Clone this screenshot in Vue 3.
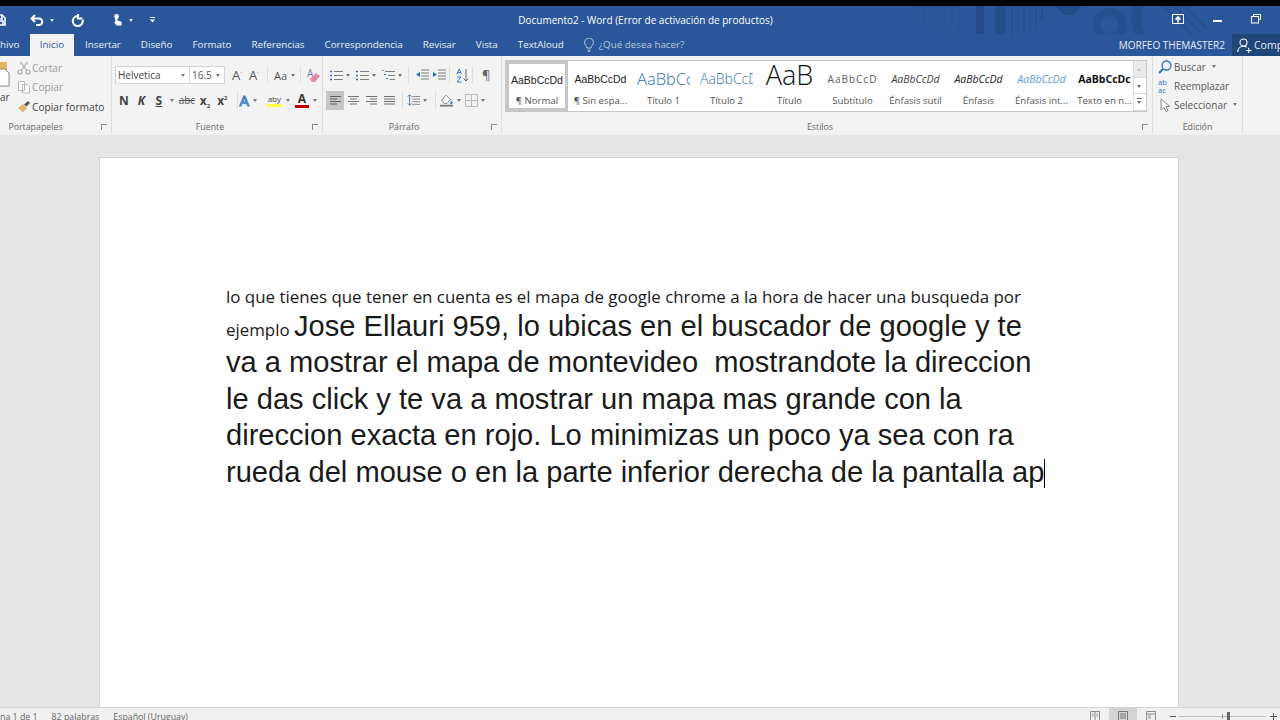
<script setup>
const tabs = ['Insertar', 'Diseño', 'Formato', 'Referencias', 'Correspondencia', 'Revisar', 'Vista', 'TextAloud']

const styles = [
  { sample: 'AaBbCcDd', name: '¶ Normal', cls: 'st-normal', active: true },
  { sample: 'AaBbCcDd', name: '¶ Sin espa...', cls: 'st-normal' },
  { sample: 'AaBbCc', name: 'Título 1', cls: 'st-h1' },
  { sample: 'AaBbCcD', name: 'Título 2', cls: 'st-h2' },
  { sample: 'AaB', name: 'Título', cls: 'st-title' },
  { sample: 'AaBbCcD', name: 'Subtítulo', cls: 'st-sub' },
  { sample: 'AaBbCcDd', name: 'Énfasis sutil', cls: 'st-em-s' },
  { sample: 'AaBbCcDd', name: 'Énfasis', cls: 'st-em' },
  { sample: 'AaBbCcDd', name: 'Énfasis int...', cls: 'st-em-i' },
  { sample: 'AaBbCcDc', name: 'Texto en n...', cls: 'st-bold' },
]

const bigLines = [
  'va a mostrar el mapa de montevideo  mostrandote la direccion',
  'le das click y te va a mostrar un mapa mas grande con la',
  'direccion exacta en rojo. Lo minimizas un poco ya sea con ra',
]
</script>

<template>
  <div class="app">
    <div class="blackbar"></div>

    <header class="titlebar">
      <svg class="pattern" width="320" height="50" viewBox="0 0 320 50" fill="none" stroke="#274f8e">
        <g stroke-width="2" stroke="#2a5494">
          <path d="M17 0v16M24 0v18M31 0v12M38 0v24M45 0v20M52 0v16M59 0v28" />
        </g>
        <path d="M76 0v28l8 6V0z" fill="#244b87" stroke="none" />
        <path d="M95 0v32h11V0z" fill="#264e8b" stroke="none" />
        <g stroke-width="2">
          <path d="M112 0v32M118 0v30M124 0v26M130 0v24M136 0v20M142 0v14" />
        </g>
        <path d="M155 0l10 9h9l8-9z" fill="#244b87" stroke="none" />
        <circle cx="210" cy="19" r="13" stroke-width="8" />
        <path d="M240 -4a38 38 0 0 0 64 40" stroke-width="10" />
        <path d="M262 -2l34 34M272 -2l28 28M282 -2l24 24" stroke-width="2" />
      </svg>

      <div class="qat">
        <svg class="save" width="6" height="14" viewBox="0 0 6 14" fill="none" stroke="#fff" stroke-width="1.6">
          <path d="M-8 2h10l3 3v7H-8zM-3 2v4h5V2M-3 12V8h6v4" />
        </svg>
        <svg class="undo" width="14" height="12" viewBox="0 0 14 12" fill="none" stroke="#fff" stroke-width="2">
          <path d="M5 1L1.5 4.5 5 8M2 4.5h7a3 3 0 0 1 0 6.5H6" />
        </svg>
        <span class="caret light"></span>
        <svg class="redo" width="13" height="13" viewBox="0 0 13 13" fill="none" stroke="#fff" stroke-width="2">
          <path d="M8 2.2a5 5 0 1 0 3.6 3.6M7 0v4.4h4.4" />
        </svg>
        <svg class="touch" width="11" height="15" viewBox="0 0 12 15" fill="#fff">
          <circle cx="5" cy="3" r="2.6" />
          <path d="M3.6 3H6v4.4l4.4 1.4V13H5L2.4 9.4l1.2-.6z" />
        </svg>
        <span class="caret light"></span>
        <svg class="custom" width="6" height="6" viewBox="0 0 6 6" fill="#fff">
          <path d="M0 0h5v1H0zM0 2.4h5L2.5 5.4z" />
        </svg>
      </div>

      <div class="doc-title">Documento2 - Word (Error de activación de productos)</div>

      <div class="win-btns">
        <svg width="12" height="10" viewBox="0 0 12 10" fill="none" stroke="#fff">
          <rect x=".5" y=".5" width="11" height="9" />
          <path d="M6 8.5V3.4M3.6 5.6L6 3l2.4 2.6" stroke-width="1.6" />
        </svg>
        <span class="min"></span>
        <svg width="10" height="10" viewBox="0 0 10 10" fill="none" stroke="#fff">
          <path d="M2.5 2.5V.5h7v5h-2" />
          <rect x=".5" y="2.5" width="7" height="6.5" />
        </svg>
      </div>
    </header>

    <nav class="tabbar">
      <span class="tab-file">hivo</span>
      <span class="tab-active">Inicio</span>
      <span v-for="t in tabs" :key="t" class="tab">{{ t }}</span>
      <span class="tell">
        <svg width="10" height="14" viewBox="0 0 10 14" fill="none" stroke="#b9c8de">
          <path d="M3 10c0-2-2.4-3-2.4-5.6a4.4 4.4 0 0 1 8.800 0C9.400 7 7 8 7 10zM3.500 12h3M4 13.500h2" />
        </svg>
        ¿Qué desea hacer?
      </span>
      <span class="user">MORFEO THEMASTER2</span>
      <span class="share">
        <svg width="15" height="15" viewBox="0 0 15 15" fill="none" stroke="#fff" stroke-width="1.1">
          <circle cx="6.5" cy="4.5" r="3.5" />
          <path d="M.8 14c0-3.500 2.400-5.800 5.700-5.800 1.300 0 2.300.3 3.200 1M9 12.500h5.500M11.700 9.800V15" />
        </svg>
        Comp
      </span>
    </nav>

    <section class="ribbon">
      <!-- Portapapeles -->
      <div class="group g-clip">
        <div class="g-body clip-body">
          <div class="paste">
            <svg width="10" height="32" viewBox="0 0 10 32">
              <rect x="-8" y="1" width="15" height="16" fill="#e3b664" />
              <path d="M-3 8h8l4 4v13H-3z" fill="#fff" stroke="#8a8a8a" />
            </svg>
            <span class="paste-label">ar</span>
          </div>
          <div class="clip-list">
            <div class="clip-row dim">
              <svg width="14" height="14" viewBox="0 0 14 14" fill="none" stroke="#a9a9a9" stroke-width="1.1">
                <path d="M3.500 1l6 8M10.500 1l-6 8" />
                <circle cx="3" cy="11" r="2" />
                <circle cx="11" cy="11" r="2" />
              </svg>
              Cortar
            </div>
            <div class="clip-row dim">
              <svg width="14" height="14" viewBox="0 0 14 14" fill="#fff" stroke="#b5b5b5">
                <path d="M1.500 1.500h6v9h-6zM5.500 4.500h5l2 2V13h-7z" />
              </svg>
              Copiar
            </div>
            <div class="clip-row">
              <svg width="14" height="14" viewBox="0 0 14 14">
                <path d="M1 8l5-4 4 4-4 4.500z" fill="#e0b56a" />
                <path d="M7 4.500L11 1l2 2-3.500 3.500z" fill="#555" />
              </svg>
              Copiar formato
            </div>
          </div>
        </div>
        <div class="g-label">Portapapeles<i class="launcher"></i></div>
      </div>

      <!-- Fuente -->
      <div class="group g-font">
        <div class="g-body stack">
          <div class="row row-top">
            <span class="combo c-name">Helvetica<i class="caret"></i></span>
            <span class="combo c-size">16.5<i class="caret"></i></span>
            <span class="glyph grow">A<sup>˄</sup></span>
            <span class="glyph shrink">A<sup>˅</sup></span>
            <i class="sep"></i>
            <span class="aa">Aa<i class="caret"></i></span>
            <i class="sep"></i>
            <svg class="eraser" width="14" height="15" viewBox="0 0 14 15">
              <text x="0" y="9" font-size="10" font-family="Open Sans" fill="#6f7faa">A</text>
              <path d="M3 11l6-6 4 3-5 6H5z" fill="#e58aa4" />
            </svg>
          </div>
          <div class="row row-fmt">
            <b class="fmt f-n">N</b>
            <b class="fmt f-k">K</b>
            <b class="fmt f-s">S</b><i class="caret"></i>
            <span class="strike">abc</span>
            <b class="fmt f-x">x<sub>2</sub></b>
            <b class="fmt f-x">x<sup>2</sup></b>
            <i class="sep"></i>
            <span class="fx">A</span><i class="caret after-fx"></i>
            <span class="hl">aby</span><i class="caret"></i>
            <span class="fc">A</span><i class="caret"></i>
          </div>
        </div>
        <div class="g-label">Fuente<i class="launcher"></i></div>
      </div>

      <!-- Párrafo -->
      <div class="group g-para">
        <div class="g-body stack">
          <div class="row row-para">
            <svg class="ic" width="13" height="13" viewBox="0 0 13 13" stroke="#7d7d7d"><path d="M4 2.500h9M4 6.500h9M4 10.500h9" /><path d="M0 2.500h2M0 6.500h2M0 10.500h2" stroke="#2b6fb8" stroke-width="1.500" /></svg><i class="caret"></i>
            <svg class="ic" width="13" height="13" viewBox="0 0 13 13" stroke="#7d7d7d"><path d="M4 2.500h9M4 6.500h9M4 10.500h9" /><path d="M0 2.500h2M0 6.500h2M0 10.500h2" stroke="#2b6fb8" stroke-width="1.500" /></svg><i class="caret"></i>
            <svg class="ic" width="13" height="13" viewBox="0 0 13 13" stroke="#7d7d7d"><path d="M3 2.500h10M6 6.500h7M8 10.500h5" /><path d="M0 1.500h1.500M2 5.500h2M4 9.500h2" stroke="#2b6fb8" /></svg><i class="caret"></i>
            <i class="sep"></i>
            <svg class="ic" width="14" height="12" viewBox="0 0 14 12" stroke="#7d7d7d"><path d="M6 1h8M6 4h8M6 7h8M6 10h8" /><path d="M5 3L1 5.500 5 8z" fill="#2b6fb8" stroke="none" /></svg>
            <svg class="ic" width="14" height="12" viewBox="0 0 14 12" stroke="#7d7d7d"><path d="M6 1h8M6 4h8M6 7h8M6 10h8" /><path d="M1 3l4 2.500L1 8z" fill="#2b6fb8" stroke="none" /></svg>
            <i class="sep"></i>
            <svg class="ic" width="13" height="15" viewBox="0 0 13 15" fill="none" stroke="#3a78bd"><path d="M1 6l2.200-5L5.500 6M1.500 4.500H5M1 9h4l-4 5h4.500" /><path d="M10 1v12M7.500 10.500L10 13l2.500-2.500" stroke="#666" /></svg>
            <i class="sep"></i>
            <span class="pilcrow">¶</span>
          </div>
          <div class="row row-para2">
            <span class="al on"><svg width="11" height="9" viewBox="0 0 11 9" stroke="#5f5f5f"><path d="M0 .5h11M0 3h7M0 5.500h11M0 8h7" /></svg></span>
            <span class="al"><svg width="11" height="9" viewBox="0 0 11 9" stroke="#6f6f6f"><path d="M0 .5h11M2 3h7M0 5.500h11M2 8h7" /></svg></span>
            <span class="al"><svg width="11" height="9" viewBox="0 0 11 9" stroke="#6f6f6f"><path d="M0 .5h11M4 3h7M0 5.500h11M4 8h7" /></svg></span>
            <span class="al"><svg width="11" height="9" viewBox="0 0 11 9" stroke="#6f6f6f"><path d="M0 .5h11M0 3h11M0 5.500h11M0 8h11" /></svg></span>
            <i class="sep"></i>
            <svg class="ic" width="13" height="14" viewBox="0 0 15 14" fill="none" stroke="#7d7d7d"><path d="M6 3h9M6 6h9M6 9h9M6 12h9" /><path d="M3 1v12M1 3l2-2 2 2M1 11l2 2 2-2" stroke="#2b6fb8" /></svg><i class="caret"></i>
            <i class="sep"></i>
            <svg class="ic" width="14" height="14" viewBox="0 0 16 15"><path d="M2 8l5-6 5 5-4 4.500H5z" fill="#fff" stroke="#777" /><path d="M13 8c1 1.500 1.500 2 1.500 3a1.500 1.500 0 0 1-3 0c0-1 .5-1.500 1.500-3z" fill="#4a8ccb" /><rect x="0" y="13" width="15" height="2" fill="#777" /></svg><i class="caret"></i>
            <svg class="ic" width="13" height="13" viewBox="0 0 13 13" fill="none" stroke="#b9b9b9"><path d="M.5.500h12v12H.5zM6.500.500v12M.5 6.500h12" /></svg><i class="caret"></i>
          </div>
        </div>
        <div class="g-label">Párrafo<i class="launcher"></i></div>
      </div>

      <!-- Estilos -->
      <div class="group g-styles">
        <div class="g-body styles-body">
          <div class="gallery">
            <div class="gallery-items">
              <div v-for="s in styles" :key="s.name" class="style-item" :class="{ active: s.active }">
                <div class="style-sample" :class="s.cls">{{ s.sample }}</div>
                <div class="style-name">{{ s.name }}</div>
              </div>
            </div>
            <div class="gallery-scroll">
              <span class="up"></span>
              <span class="down"></span>
              <span class="more"></span>
            </div>
          </div>
        </div>
        <div class="g-label">Estilos<i class="launcher"></i></div>
      </div>

      <!-- Edición -->
      <div class="group g-edit">
        <div class="g-body edit-list">
          <div class="edit-row">
            <svg width="14" height="14" viewBox="0 0 14 14" fill="none" stroke="#2b6fb8" stroke-width="1.3">
              <circle cx="8.500" cy="5.500" r="4.500" /><path d="M5 9l-4 4" stroke-width="2" />
            </svg>
            Buscar<i class="caret"></i>
          </div>
          <div class="edit-row">
            <span class="abac">ab<br />ac</span>
            Reemplazar
          </div>
          <div class="edit-row">
            <svg width="14" height="14" viewBox="0 0 14 14" fill="#fff" stroke="#888">
              <path d="M3 1v11l3-2.500 2 4 2-1-2-4h4z" />
            </svg>
            Seleccionar<i class="caret"></i>
          </div>
        </div>
        <div class="g-label">Edición</div>
      </div>

      <div class="ribbon-rest"></div>
    </section>

    <main class="workspace">
      <article class="page">
        <p class="line doc-small">lo que tienes que tener en cuenta es el mapa de google chrome a la hora de hacer una busqueda por</p>
        <p class="line doc-big"><span class="doc-inline">ejemplo </span>Jose Ellauri 959, lo ubicas en el buscador de google y te</p>
        <p v-for="l in bigLines" :key="l" class="line doc-big">{{ l }}</p>
        <p class="line doc-big">rueda del mouse o en la parte inferior derecha de la pantalla ap<span class="cursor"></span></p>
      </article>
    </main>

    <footer class="statusbar">
      <span class="st-left">na 1 de 1</span>
      <span class="st-left">82 palabras</span>
      <span class="st-left">Español (Uruguay)</span>
      <span class="st-views">
        <span class="view"><svg width="10" height="10" viewBox="0 0 10 10" fill="none" stroke="#8a8a8a"><path d="M.5.500h9v9h-9zM5 .5v9M2 3h1.500M2 5h1.500M6.500 3H8M6.500 5H8" /></svg></span>
        <span class="view on"><svg width="10" height="10" viewBox="0 0 10 10" fill="none" stroke="#777"><path d="M.5.500h9v9h-9zM2 3h6M2 5h6M2 7h6" /></svg></span>
        <span class="view"><svg width="10" height="10" viewBox="0 0 10 10" fill="none" stroke="#8a8a8a"><path d="M.5.500h9v9h-9zM.5 3h9M2 5h3M2 7h3" /></svg></span>
      </span>
      <span class="zoom">
        <i class="z-minus"></i>
        <span class="z-track"><i class="z-tick"></i><i class="z-thumb"></i></span>
        <i class="z-plus"></i>
      </span>
    </footer>
  </div>
</template>

<style scoped>
.app {
  width: 1280px; height: 720px; overflow: hidden; display: flex; flex-direction: column;
  font-family: "Open Sans", "Noto Sans", sans-serif; color: #444; background: #e6e6e6;
}
.blackbar { height: 6px; background: #000; flex: none; }

.titlebar {
  height: 28px; flex: none; background: #2b579a; display: flex; align-items: center;
  position: relative; color: #fff;
}
.pattern { position: absolute; left: 900px; top: 0; }
.qat { display: flex; align-items: center; width: 300px; position: relative; }
.save { margin-right: 24px; }
.undo { margin-right: 6px; }
.redo { margin-left: 17px; }
.touch { margin-left: 28px; margin-right: 6px; }
.custom { margin-left: 17px; }
.doc-title {
  position: absolute; left: 0; right: 0; top: 6px; text-align: center; font-size: 10px; line-height: 16px;
  padding-left: 11px;
}
.win-btns {
  position: absolute; right: 19px; top: 8px; display: flex; align-items: center; gap: 29px;
}
.min { width: 9px; height: 2px; background: #fff; margin-top: 4px; }

.tabbar {
  height: 22px; flex: none; background: #2b579a; display: flex; align-items: stretch; position: relative;
  color: #e9eef6; font-size: 9.8px; line-height: 22px;
}
.tab-file { width: 30px; }
.tab-active { width: 44px; background: #f3f3f3; color: #2b579a; text-align: center; }
.tab { margin-left: 20px; }
.tab:nth-child(3) { margin-left: 11px; }
.tell { margin-left: 20px; color: #b9c8de; display: flex; align-items: center; gap: 5px; }
.user { margin-left: auto; margin-right: 7px; font-size: 10px; }
.share {
  width: 48px; background: #1f4478; display: flex; align-items: center; gap: 2px; padding-left: 5px;
  box-sizing: border-box; white-space: nowrap; overflow: hidden; font-size: 10.5px;
}
.share svg { flex: none; }

.ribbon { height: 77px; flex: none; background: #f3f3f3; display: flex; font-size: 10px; }
.group {
  display: flex; flex-direction: column; border-right: 1px solid #dcdcdc; flex: none; box-sizing: border-box;
}
.g-body { height: 65px; box-sizing: border-box; }
.g-label {
  height: 12px; line-height: 12px; font-size: 8.8px; color: #666; text-align: center; position: relative;
}
.launcher {
  position: absolute; right: 4px; top: 3px; width: 5px; height: 5px;
  border-left: 1px solid #8a8a8a; border-top: 1px solid #8a8a8a;
}
.g-clip { width: 112px; }
.g-clip .g-label { padding-right: 40px; }
.g-font { width: 211px; }
.g-font .g-label { padding-right: 14px; }
.g-para { width: 179px; }
.g-para .g-label { padding-right: 16px; }
.g-styles { width: 651px; }
.g-styles .g-label { padding-right: 14px; }
.g-edit { width: 90px; }
.ribbon-rest { flex: 1; }

.caret {
  display: inline-block; width: 0; height: 0; border-left: 2.5px solid transparent;
  border-right: 2.5px solid transparent; border-top: 3px solid #777; flex: none;
}
.caret.light { border-top-color: #dfe6f1; }

.clip-body { display: flex; }
.paste { width: 17px; position: relative; padding-top: 5px; display: flex; flex-direction: column; }
.paste-label { position: absolute; left: 0; top: 34px; }
.clip-list { display: flex; flex-direction: column; padding-top: 2px; }
.clip-row { height: 19.5px; display: flex; align-items: center; gap: 1px; white-space: nowrap; font-size: 10.2px; }
.clip-row.dim { color: #9a9a9a; }

.stack { display: flex; flex-direction: column; padding: 9px 0 0 3px; }
.row { display: flex; align-items: center; height: 20px; }
.combo {
  height: 18px; box-sizing: border-box; background: #fff; border: 1px solid #d4d4d4; display: flex;
  align-items: center; justify-content: space-between; padding: 0 4px 0 2px; font-size: 10px; color: #444;
}
.c-name { width: 75px; }
.c-size { width: 36px; margin-left: -1px; color: #555; }
.glyph { font-size: 13px; color: #555; }
.glyph sup { font-size: 6px; vertical-align: 4px; line-height: 0; }
.grow { margin-left: 7px; width: 17px; }
.shrink { width: 12px; }
.aa { display: flex; align-items: center; gap: 4px; font-size: 11px; color: #555; width: 20px; }
.row-top .sep { margin: 0 6px; }

.sep { width: 1px; height: 16px; background: #dcdcdc; flex: none; }
.row-fmt { margin-top: 5px; padding-left: 3px; }
.fmt { font-size: 12px; color: #444; text-align: center; }
.f-n { width: 12px; margin-right: 6px; }
.f-k { width: 12px; margin-right: 6px; font-style: italic; }
.f-s { width: 12px; margin-right: 5px; text-decoration: underline; }
.row-fmt .caret { margin-right: 5px; }
.row-fmt .caret.after-fx { margin-right: 10px; }
.strike { font-size: 10px; text-decoration: line-through; width: 16px; margin-right: 3px; color: #555; }
.f-x { width: 15px; margin-right: 3px; white-space: nowrap; }
.f-x sub, .f-x sup { font-size: 6px; line-height: 0; }
.row-fmt .sep { margin: 0 2px 0 4px; }
.fx { font-size: 15px; color: #cfe0f3; -webkit-text-stroke: 1px #3f7fc4; margin-right: 4px; line-height: 14px; }
.hl {
  font-size: 8px; line-height: 10px; border-bottom: 3px solid #ffff3c; margin-right: 4px; color: #444; width: 15px;
  text-align: center;
}
.fc {
  font-size: 12px; font-weight: 700; line-height: 12px; border-bottom: 3px solid #c00000; margin-right: 4px;
  width: 15px; text-align: center; color: #333;
}

.row-para { gap: 3px; padding-left: 4px; }
.row-para .caret { margin-right: 3px; }
.row-para .sep { margin: 0 3px 0 0; }
.pilcrow { font-size: 13px; margin-left: 3px; color: #666; }
.row-para2 { margin-top: 5px; }
.al { width: 18px; height: 19px; display: flex; align-items: center; justify-content: center; }
.al.on { background: #c6c6c6; }
.row-para2 .sep { margin: 0 4px; }
.row-para2 .caret { margin: 0 4px 0 3px; }
.ic { flex: none; }

.styles-body { padding: 4px 0 0 3px; }
.gallery {
  width: 642px; height: 52px; box-sizing: border-box; border: 1px solid #c6c6c6; background: #fff; display: flex;
}
.gallery-items { display: flex; flex: 1; min-width: 0; }
.style-item { width: 63px; flex: none; box-sizing: border-box; height: 50px; text-align: center; overflow: hidden; }
.style-item.active { border: 3px solid #c6c6c6; width: 62px; margin-right: 1px; }
.style-sample {
  height: 26px; line-height: 36px; white-space: nowrap; overflow: hidden; font-size: 10px; color: #222; margin: 0 1px;
}
.style-item.active .style-sample { height: 23px; line-height: 33px; margin: 0; }
.style-name { font-size: 9.6px; color: #555; line-height: 16px; white-space: nowrap; margin-top: 6px; }
.st-normal { font-family: "Liberation Sans", sans-serif; font-size: 10.5px; }
.style-sample.st-h1 { font-size: 16.5px; color: #2e74b5; font-weight: 300; margin: 0 5px; text-align: left; }
.style-sample.st-h2 { font-size: 14px; color: #2e74b5; font-weight: 300; margin: 0 5px; text-align: left; }
.style-sample.st-title { font-size: 27px; line-height: 27px; color: #111; font-weight: 300; margin: 0; height: 26px; }
.st-sub { font-size: 10px; letter-spacing: 1px; color: #5a5a5a; }
.st-em-s { font-size: 10.5px; font-style: italic; color: #404040; }
.st-em { font-size: 10.5px; font-style: italic; color: #222; }
.st-em-i { font-size: 10.5px; font-style: italic; color: #5b9bd5; }
.st-bold { font-size: 10.5px; font-weight: 700; color: #111; }

.gallery-scroll {
  width: 12px; flex: none; display: flex; flex-direction: column; background: #fff; border-left: 1px solid #dcdcdc;
}
.gallery-scroll span { flex: 1; position: relative; border-bottom: 1px solid #dcdcdc; }
.gallery-scroll .up { background: #eaeaea; }
.gallery-scroll span::after {
  content: ""; position: absolute; left: 3px; top: 7px; border-left: 2.5px solid transparent;
  border-right: 2.5px solid transparent; border-top: 3px solid #666;
}
.gallery-scroll .up::after { border-top: 0; border-bottom: 3px solid #c4c4c4; }
.gallery-scroll .more::before {
  content: ""; position: absolute; left: 3px; top: 4px; width: 5px; height: 1px; background: #666;
}

.edit-list { display: flex; flex-direction: column; padding: 1px 0 0 5px; }
.edit-row { height: 19px; display: flex; align-items: center; gap: 2px; white-space: nowrap; color: #555; }
.edit-row .caret { margin-left: 4px; }
.edit-row svg { flex: none; }
.abac { width: 14px; font-size: 7.5px; line-height: 8px; color: #2b6fb8; flex: none; }

.workspace {
  flex: 1; min-height: 0; background: #e6e6e6; padding: 22px 0 0 99px; border-top: 2px solid #f1f1f1;
  box-sizing: border-box; overflow: hidden;
}
.page {
  width: 1080px; height: 620px; box-sizing: border-box; background: #fff; border: 1px solid #d4d4d4;
  padding: 128px 0 0 126px;
}
.line { margin: 0; white-space: pre; color: #1a1a1a; }
.doc-small { font-size: 16.9px; line-height: 22px; }
.doc-big { font-size: 29.1px; line-height: 36.4px; font-family: "Liberation Sans", Arial, sans-serif; }
.doc-inline { font-size: 16.9px; line-height: 1; font-family: "Open Sans", sans-serif; }
.cursor { display: inline-block; width: 1px; height: 29px; background: #000; vertical-align: -6px; }

.statusbar {
  height: 13px; flex: none; box-sizing: border-box; background: #f1f1f1; border-top: 1px solid #d4d4d4; display: flex;
  align-items: flex-start; font-size: 8.8px; color: #666; line-height: 18px; overflow: hidden; position: relative;
}
.st-left { margin-right: 14px; }
.st-views { position: absolute; left: 1081px; top: 0; display: flex; }
.view { width: 28px; height: 12px; display: flex; justify-content: center; padding-top: 3px; box-sizing: border-box; }
.view.on { background: #d4d4d4; }
.zoom { position: absolute; left: 1170px; top: 0; width: 110px; height: 12px; }
.z-minus { position: absolute; left: 0; top: 8px; width: 6px; height: 1px; background: #555; }
.z-plus { position: absolute; left: 100px; top: 8px; width: 7px; height: 1px; background: #555; }
.z-plus::after { content: ""; position: absolute; left: 3px; top: -3px; width: 1px; height: 7px; background: #555; }
.z-track { position: absolute; left: 9px; top: 8px; width: 87px; height: 1px; background: #bdbdbd; }
.z-tick { position: absolute; left: 43px; top: -2px; width: 1px; height: 5px; background: #999; }
.z-thumb { position: absolute; left: 48px; top: -4px; width: 3px; height: 9px; background: #666; }
</style>

<style>
html, body { margin: 0; background: #e6e6e6; }
</style>
